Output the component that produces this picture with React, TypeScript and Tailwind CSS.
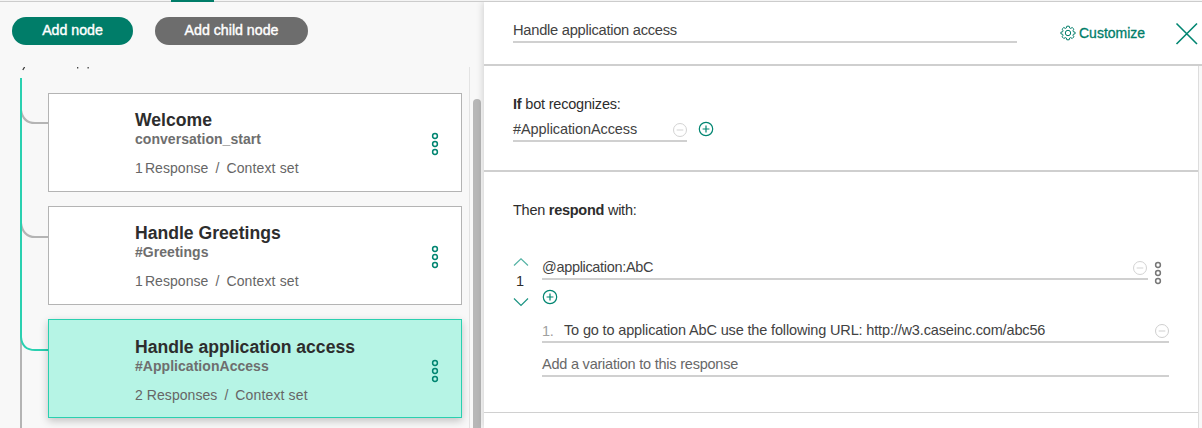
import type { ReactNode } from "react";

type Node = { title: string; condition: string; count: string; label: string; active?: boolean };

const nodes: Node[] = [
  { title: "Welcome", condition: "conversation_start", count: "1", label: "Response" },
  { title: "Handle Greetings", condition: "#Greetings", count: "1", label: "Response" },
  { title: "Handle application access", condition: "#ApplicationAccess", count: "2", label: "Responses", active: true },
];

function Dots({ className }: { className: string }) {
  return (
    <svg className={className} width="8" height="24" viewBox="0 0 8 24" fill="none" stroke="currentColor" strokeWidth="1.5">
      <circle cx="4" cy="4" r="2.4" />
      <circle cx="4" cy="12" r="2.4" />
      <circle cx="4" cy="20" r="2.4" />
    </svg>
  );
}

function Minus({ className }: { className: string }) {
  return (
    <svg className={className} width="16" height="16" viewBox="0 0 16 16" fill="none" stroke="currentColor">
      <circle cx="8" cy="8" r="6.5" />
      <path d="M4.7 8h6.6" />
    </svg>
  );
}

function Plus({ className }: { className: string }) {
  return (
    <svg className={className} width="16" height="16" viewBox="0 0 16 16" fill="none" stroke="currentColor" strokeWidth="1.2">
      <circle cx="8" cy="8" r="6.7" />
      <path d="M4.6 8h6.8M8 4.6v6.8" />
    </svg>
  );
}

function Gear() {
  return (
    <svg className="mt-px shrink-0" width="16" height="16" viewBox="0 0 16 16" fill="none" stroke="currentColor" strokeWidth="1" strokeLinejoin="round">
      <path d="M6.8 1.2h2.4l.4 1.7 1.1.5 1.5-.9 1.7 1.7-.9 1.5.4 1.1 1.7.4v1.6l-1.7.4-.4 1.1.9 1.5-1.7 1.7-1.5-.9-1.1.5-.4 1.7H6.8l-.4-1.7-1.1-.5-1.5.9-1.7-1.7.9-1.5-.4-1.1L.9 8.8V7.2l1.7-.4L3 5.700l-.9-1.5 1.7-1.7 1.5.9 1.1-.5z" />
      <circle cx="8" cy="8" r="2.7" />
    </svg>
  );
}

function NodeCard({ node }: { node: Node }) {
  return (
    <div
      className={
        node.active
          ? "flex h-[99px] w-[414px] border border-[#2ad0b0] bg-[#b6f4e5] pt-px shadow-[0_3px_8px_rgba(0,0,0,0.22)]"
          : "flex h-[99px] w-[414px] border border-[#b4b4b4] bg-white"
      }
    >
      <div className="w-[296px] grow pl-[86px] pt-[15px] whitespace-pre">
        <div className="h-[20px] text-[17.6px] leading-[22px] font-bold text-[#2d2d2d]">{node.title}</div>
        <div className="text-[14px] leading-[20px] font-bold tracking-[0.04px] text-[#6e6e6e]">{node.condition}</div>
        <div className="mt-[9px] text-[14px] leading-[20px] tracking-[0.06px] text-[#666666]">
          <span className={node.count === "1" ? "tracking-[-0.9px]" : ""}>{node.count} </span>
          {node.label}
          <span className="mx-[7px]">/</span>
          <span className="tracking-[0.14px]">Context set</span>
        </div>
      </div>
      <Dots className="mt-[38px] mr-[22px] shrink-0 text-[#008571]" />
    </div>
  );
}

function Sidebar() {
  return (
    <aside className="flex w-[484px] shrink-0 flex-col bg-[#f8f8f8]">
      <div className="flex h-[65px] shrink-0 items-start gap-[22px] pt-[15px] pl-[12px]">
        <button className="h-[28px] w-[121px] rounded-full bg-[#007d69] text-[14.2px] text-white [-webkit-text-stroke:0.4px_white]">Add node</button>
        <button className="h-[28px] w-[153px] rounded-full bg-[#6d6d6d] text-[14.2px] text-white [-webkit-text-stroke:0.4px_white]">Add child node</button>
      </div>
      <div className="flex min-h-0 grow">
        <svg className="shrink-0" width="48" height="361" viewBox="0 67 48 361" fill="none" strokeWidth="2">
          <path d="M21 335V428" stroke="#b4b4b4" />
          <path d="M21 110Q23 123 35 123H48M21 223Q23 237 35 237H48" stroke="#b4b4b4" />
          <path d="M21 78V337Q22 350 35 350H48" stroke="#2ad0b0" />
          <path d="M24.600 67L22.800 70" stroke="#333" strokeWidth="1.200" />
        </svg>
        <div className="grow">
          <svg className="block" width="100" height="26" fill="#444">
            <rect x="29" y="0" width="1.300" height="1.500" />
            <rect x="39.500" y="0" width="1.300" height="1.500" />
          </svg>
          <div className="flex flex-col gap-[14px]">
            {nodes.map((node) => (
              <NodeCard key={node.title} node={node} />
            ))}
          </div>
        </div>
        <div className="w-[15px] shrink-0 border-l border-[#e3e3e3] bg-[#f8f8f8] pt-[32px] pl-[3px]">
          <div className="h-full w-[8px] rounded-t-full bg-[#b7b7b7]" />
        </div>
      </div>
    </aside>
  );
}

function Field({ className, children }: { className: string; children: ReactNode }) {
  return <div className={`flex border-b-2 border-[#d0d0d0] ${className}`}>{children}</div>;
}

function Editor() {
  return (
    <main className="relative flex w-[718px] flex-col bg-white text-[14.5px] leading-[18px] tracking-[-0.2px] whitespace-nowrap text-[#424242] shadow-[-1px_0_7px_rgba(0,0,0,0.16)]">
      <header className="flex h-[64px] shrink-0 border-b-2 border-[#cfcfcf] pl-[29px]">
        <Field className="mt-[19px] h-[22px] w-[504px] text-[14.7px] tracking-[-0.27px]">Handle application access</Field>
        <div className="mt-[22px] ml-[43px] flex w-[115px] gap-[3px] text-[14px] tracking-normal text-[#007d69] [-webkit-text-stroke:0.3px_#007d69]">
          <Gear />
          Customize
        </div>
        <svg className="mt-[20px] shrink-0" width="24" height="24" fill="none" stroke="#008571" strokeWidth="1.6">
          <path d="M1.500 1.500L22 22M22 1.500L1.500 22" />
        </svg>
      </header>
      <div className="flex min-h-0 grow">
        <div className="flex w-[714px] flex-col">
          <section className="h-[106px] shrink-0 border-b-2 border-[#cfcfcf] pt-[29px] pl-[29px] text-[#2d2d2d]">
            <div>
              <b>If</b> bot recognizes:
            </div>
            <div className="mt-[7px] flex">
              <Field className="h-[22px] w-[174px] justify-between tracking-[-0.09px] text-[#424242]">
                #ApplicationAccess
                <Minus className="mt-[2px] mr-[-1px] text-[#d3d3d3]" />
              </Field>
              <Plus className="mt-px ml-[11px] text-[#008571]" />
            </div>
          </section>
          <section className="h-[241px] shrink-0 border-b border-[#d0d0d0] pt-[29px] pl-[29px] text-[#2d2d2d]">
            <div className="tracking-[-0.26px]">
              Then <b>respond</b> with:
            </div>
            <div className="mt-[39px] flex">
              <div className="flex w-[29px] flex-col items-start">
                <svg width="16" height="14" fill="none" stroke="#55b3a5" strokeWidth="1.200">
                  <path d="M1 7.500L8 .8L15 7.500" />
                </svg>
                <span className="pl-[3px]">1</span>
                <svg width="16" height="18" fill="none" stroke="#1d9483" strokeWidth="1.200">
                  <path d="M1 8.500L8 15.500L15 8.500" />
                </svg>
              </div>
              <div className="w-[627px]">
                <div className="flex">
                  <Field className="h-[22px] w-[606px] justify-between tracking-[-0.32px] text-[#424242]">
                    @application:AbC
                    <Minus className="mt-[2px] text-[#d3d3d3]" />
                  </Field>
                  <Dots className="mt-[3px] ml-[6px] text-[#777777]" />
                </div>
                <Plus className="mt-[4px] text-[#008571]" />
                <Field className="mt-[16px] h-[22px] text-[#424242]">
                  <span className="w-[22px] pt-px text-[#a0a0a0]">1.</span>
                  <span className="grow tracking-[-0.15px]">To go to application AbC use the following URL: http://w3.caseinc.com/abc56</span>
                  <Minus className="mt-[2px] mr-[-1px] text-[#cfcfcf]" />
                </Field>
                <Field className="mt-[12px] h-[22px] tracking-[-0.22px] text-[#686868]">Add a variation to this response</Field>
              </div>
            </div>
          </section>
        </div>
        <div className="grow border-l border-[#dddddd] bg-[#f8f8f8]" />
      </div>
    </main>
  );
}

export default function App() {
  return (
    <div className="flex h-[428px] w-[1202px] flex-col overflow-hidden bg-[#f8f8f8] font-['Liberation_Sans',Arial,sans-serif]">
      <div className="relative z-10 flex h-[2px] shrink-0 border-b border-[#cccccc] bg-[#f4f4f4] pl-[171px]">
        <div className="h-[2px] w-[43px] shrink-0 bg-[#007d69]" />
      </div>
      <div className="flex min-h-0 grow">
        <Sidebar />
        <Editor />
      </div>
    </div>
  );
}
